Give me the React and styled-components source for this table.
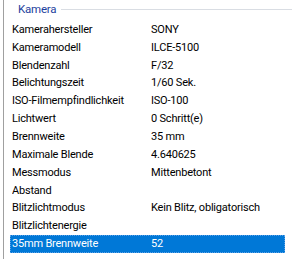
import React from "react";
import styled, { createGlobalStyle } from "styled-components";

const Global = createGlobalStyle`
  html, body {
    margin: 0;
    padding: 0;
    background: #ffffff;
  }
  body {
    font-family: Roboto, "Liberation Sans", Arial, sans-serif;
    font-size: 11px;
    letter-spacing: -0.2px;
    color: #000000;
    overflow: hidden;
  }
`;

const Panel = styled.div`
  width: 289px;
  height: 259px;
  margin-left: 3px;
  border-left: 1px solid #a0a0a0;
  box-sizing: border-box;
  display: flex;
  flex-direction: column;
`;

const GroupHeader = styled.div`
  display: flex;
  align-items: center;
  height: 18px;
  padding-left: 14px;
  gap: 5px;
  margin-bottom: 3px;
`;

const GroupTitle = styled.span`
  color: #1e3f9e;
  font-size: 11.5px;
  line-height: 18px;
`;

const GroupRule = styled.span`
  flex: 1;
  height: 1px;
  background: #d9dde3;
`;

const Row = styled.div`
  display: grid;
  grid-template-columns: 139px 1fr;
  align-items: center;
  height: 17.85px;
  margin-left: 6px;
  margin-right: 7px;
  padding-left: 2px;
  background: ${({ $selected }) => ($selected ? "#0078d7" : "transparent")};
  color: ${({ $selected }) => ($selected ? "#ffffff" : "#000000")};
  outline: ${({ $selected }) => ($selected ? "1px dotted #5aa0e6" : "none")};
  outline-offset: -1px;
  white-space: nowrap;
`;

const Cell = styled.span`
  line-height: 18px;
  overflow: hidden;
`;

const rows = [
  ["Kamerahersteller", "SONY"],
  ["Kameramodell", "ILCE-5100"],
  ["Blendenzahl", "F/32"],
  ["Belichtungszeit", "1/60 Sek."],
  ["ISO-Filmempfindlichkeit", "ISO-100"],
  ["Lichtwert", "0 Schritt(e)"],
  ["Brennweite", "35 mm"],
  ["Maximale Blende", "4.640625"],
  ["Messmodus", "Mittenbetont"],
  ["Abstand", ""],
  ["Blitzlichtmodus", "Kein Blitz, obligatorisch"],
  ["Blitzlichtenergie", ""],
  ["35mm Brennweite", "52"],
];

export default function App() {
  return (
    <>
      <Global />
      <Panel>
        <GroupHeader>
          <GroupTitle>Kamera</GroupTitle>
          <GroupRule />
        </GroupHeader>
        {rows.map(([label, value], i) => (
          <Row key={label} $selected={i === rows.length - 1}>
            <Cell>{label}</Cell>
            <Cell>{value}</Cell>
          </Row>
        ))}
      </Panel>
    </>
  );
}
